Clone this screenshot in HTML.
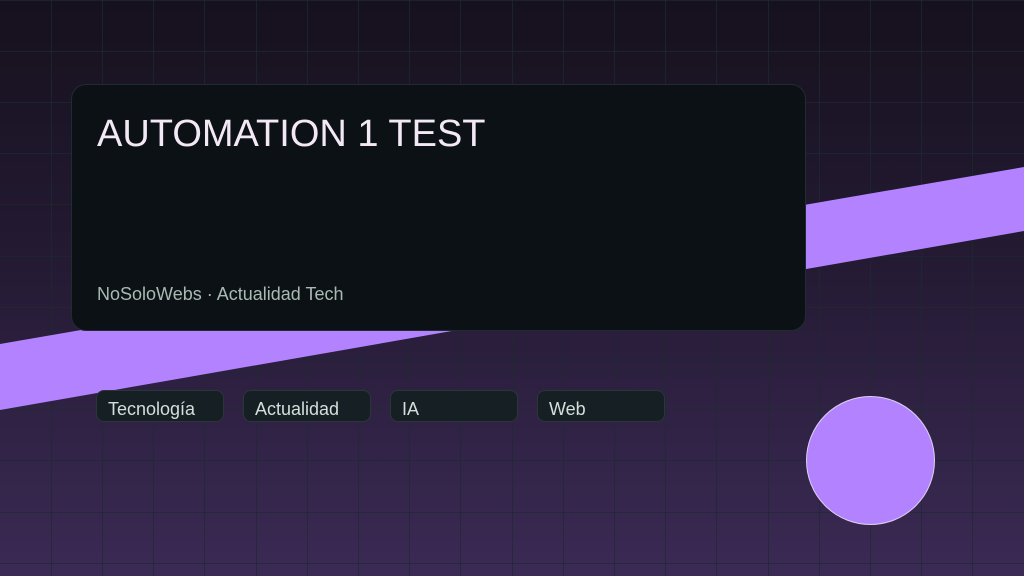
<!DOCTYPE html>
<html><head><meta charset="utf-8"><style>
*{margin:0;padding:0;box-sizing:border-box}
body{width:1024px;height:576px;overflow:hidden;position:relative;font-family:"Liberation Sans",sans-serif;
background:linear-gradient(180deg,#16111d 0%,#241a33 45%,#3b2a55 100%);}
svg{position:absolute;left:0;top:0}
.card{position:absolute;left:71px;top:84px;width:735px;height:247px;background:#0c1115;border:1px solid #1f2c31;border-radius:15px}
.title{position:absolute;left:25px;top:28px;font-size:38px;color:#f2e8f6;letter-spacing:0}
.sub{position:absolute;left:25px;top:199px;font-size:18px;color:#a9bab3}
.tag{position:absolute;top:390px;width:128px;height:32px;background:#162024;border:1px solid #2a3639;border-radius:8px;color:#d3dfdb;font-size:18px;padding:8px 0 0 11px}
.circle{position:absolute;left:806px;top:396px;width:129px;height:129px;border-radius:50%;background:#b383ff;border:1px solid #ddd0ee}
</style></head><body>
<svg width="1024" height="576">
<g stroke="#1d2b30" stroke-opacity="0.7" stroke-width="1">
<path d="M51.5 0V576M102.5 0V576M153.5 0V576M204.5 0V576M256.5 0V576M307.5 0V576M358.5 0V576M409.5 0V576M460.5 0V576M512.5 0V576M563.5 0V576M614.5 0V576M665.5 0V576M716.5 0V576M768.5 0V576M819.5 0V576M870.5 0V576M921.5 0V576M972.5 0V576"/>
<path d="M0 0.5H1024M0 51.5H1024M0 102.5H1024M0 153.5H1024M0 204.5H1024M0 256.5H1024M0 307.5H1024M0 358.5H1024M0 409.5H1024M0 460.5H1024M0 512.5H1024M0 563.5H1024"/>
</g>
<polygon points="0,344 1024,167 1024,231 0,410" fill="#b383ff"/></svg>
<div class="card"><div class="title">AUTOMATION 1 TEST</div><div class="sub">NoSoloWebs · Actualidad Tech</div></div>
<div class="tag" style="left:96px">Tecnología</div>
<div class="tag" style="left:243px">Actualidad</div>
<div class="tag" style="left:390px">IA</div>
<div class="tag" style="left:537px">Web</div>
<div class="circle"></div>
</body></html>
